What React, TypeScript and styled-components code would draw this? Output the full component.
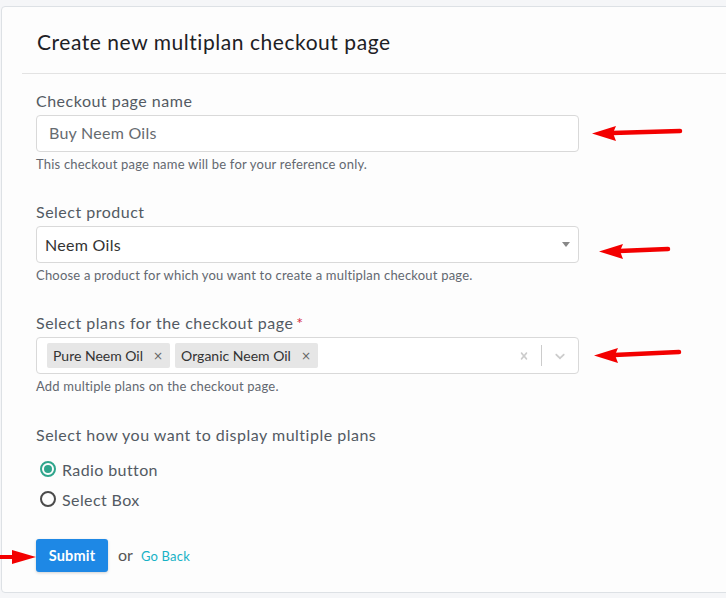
import React from "react";
import styled, { createGlobalStyle } from "styled-components";

const Global = createGlobalStyle`
  html, body { margin: 0; padding: 0; overflow: hidden; background: #f5f6f8; }
  body { font-family: Lato, "Open Sans", "Liberation Sans", sans-serif; }
  * { box-sizing: border-box; }
`;

const Page = styled.div`
  padding: 6px 0 0 1px;
  height: 598px;
`;

const Card = styled.div`
  position: relative;
  width: 760px;
  background: #fdfdfd;
  border: 1px solid #dde1e5;
  border-radius: 4px;
`;

const Header = styled.div`
  margin-left: 20px;
  padding: 22px 0 19px 15px;
  border-bottom: 1px solid #e3e3e3;
`;

const Title = styled.h1`
  margin: 0;
  font-size: 21px;
  line-height: 25px;
  font-weight: 400;
  letter-spacing: 0.55px;
  color: #1d2125;
`;

const Form = styled.div`
  padding: 17px 0 20px 34px;
`;

const Field = styled.div<{ $gap?: number }>`
  margin-bottom: ${(p) => p.$gap ?? 30}px;
`;

const Label = styled.div`
  font-size: 16px;
  line-height: 20px;
  letter-spacing: 0.5px;
  color: #535a63;
  margin-bottom: 4px;
`;

const Required = styled.span`
  color: #d62f45;
  margin-left: 3px;
`;

const Box = styled.div`
  width: 543px;
  height: 37px;
  border: 1px solid #d9d9d9;
  border-radius: 4px;
  background: #fff;
  display: flex;
  align-items: center;
`;

const InputText = styled.span`
  padding-left: 12px;
  padding-bottom: 2px;
  font-size: 16px;
  letter-spacing: 0.25px;
  color: #666b70;
`;

const SelectText = styled.span`
  flex: 1;
  padding-left: 8px;
  padding-bottom: 1px;
  font-size: 16px;
  letter-spacing: 0.3px;
  color: #333;
`;

const Caret = styled.span`
  width: 0;
  height: 0;
  border-left: 4.5px solid transparent;
  border-right: 4.5px solid transparent;
  border-top: 5px solid #888;
  margin-right: 8px;
`;

const Help = styled.div`
  margin-top: 4px;
  font-size: 13px;
  line-height: 16px;
  letter-spacing: 0.2px;
  color: #636870;
`;

const Tags = styled.div`
  flex: 1;
  display: flex;
  gap: 5px;
  padding-left: 10px;
`;

const Tag = styled.span`
  display: inline-flex;
  align-items: center;
  height: 25px;
  background: #e6e6e6;
  border-radius: 2px;
  padding: 0 7px 0 6px;
  font-size: 14px;
  color: #333;
`;

const TagX = styled.span`
  margin-left: 10px;
  font-size: 12px;
  color: #666;
  font-family: "DejaVu Sans", sans-serif;
`;

const Indicators = styled.div`
  display: flex;
  align-items: center;
  height: 100%;
  padding-right: 10px;
`;

const Sep = styled.span`
  width: 1px;
  height: 21px;
  background: #ccc;
  margin: 0 10px 0 10px;
`;

const RadioList = styled.div`
  display: flex;
  flex-direction: column;
  margin-top: 9px;
`;

const RadioRow = styled.label`
  display: flex;
  align-items: center;
  height: 30px;
  font-size: 16px;
  letter-spacing: 0.4px;
  color: #535a63;
  padding-left: 4px;
`;

const RadioDot = styled.span<{ $on?: boolean }>`
  width: 16px;
  height: 16px;
  border-radius: 50%;
  border: 2px solid ${(p) => (p.$on ? "#2fa58c" : "#4a4a4a")};
  margin-right: 6px;
  display: flex;
  align-items: center;
  justify-content: center;
  &::after {
    content: "";
    width: 8px;
    height: 8px;
    border-radius: 50%;
    background: ${(p) => (p.$on ? "#2fa58c" : "transparent")};
  }
`;

const Actions = styled.div`
  display: flex;
  align-items: center;
  margin-top: 25px;
  gap: 10px;
`;

const Submit = styled.button`
  width: 72px;
  height: 33px;
  border: none;
  border-radius: 3px;
  background: #1e88e5;
  color: #fff;
  font-family: inherit;
  font-size: 14.5px;
  font-weight: 700;
  letter-spacing: 0.2px;
  box-shadow: 0 1px 3px rgba(0, 0, 0, 0.18);
  padding: 0;
`;

const Or = styled.span`
  font-size: 16px;
  color: #555;
  margin-top: -3px;
`;

const Back = styled.a`
  font-size: 13px;
  letter-spacing: 0.2px;
  color: #17b2c6;
  text-decoration: none;
  margin-left: -2px;
`;

const ArrowSvg = styled.svg<{ $x: number; $y: number }>`
  position: absolute;
  left: ${(p) => p.$x}px;
  top: ${(p) => p.$y}px;
  overflow: visible;
`;

function Arrow({ x, y, len, tilt = 2, right = false }: { x: number; y: number; len: number; tilt?: number; right?: boolean }) {
  const head = 24;
  if (right) {
    return (
      <ArrowSvg $x={x} $y={y} width={len} height={16}>
        <line x1={0} y1={8} x2={len - head + 2} y2={8} stroke="#f30000" strokeWidth={4} strokeLinecap="round" />
        <polygon points={`${len - head},1 ${len},8 ${len - head},15`} fill="#f30000" />
      </ArrowSvg>
    );
  }
  return (
    <ArrowSvg $x={x} $y={y} width={len} height={16}>
      <line x1={head - 4} y1={8} x2={len - 2} y2={8 - tilt} stroke="#f30000" strokeWidth={4.5} strokeLinecap="round" />
      <polygon points={`0,8.5 ${head},1 ${head - 3},8 ${head},16`} fill="#f30000" />
    </ArrowSvg>
  );
}

export default function App() {
  return (
    <>
      <Global />
      <Page>
        <Card>
          <Header>
            <Title>Create new multiplan checkout page</Title>
          </Header>
          <Form>
            <Field>
              <Label>Checkout page name</Label>
              <Box>
                <InputText>Buy Neem Oils</InputText>
              </Box>
              <Help>This checkout page name will be for your reference only.</Help>
            </Field>
            <Field>
              <Label>Select product</Label>
              <Box>
                <SelectText>Neem Oils</SelectText>
                <Caret />
              </Box>
              <Help>Choose a product for which you want to create a multiplan checkout page.</Help>
            </Field>
            <Field $gap={31}>
              <Label>
                Select plans for the checkout page<Required>*</Required>
              </Label>
              <Box>
                <Tags>
                  <Tag>
                    Pure Neem Oil<TagX>×</TagX>
                  </Tag>
                  <Tag>
                    Organic Neem Oil<TagX>×</TagX>
                  </Tag>
                </Tags>
                <Indicators>
                  <svg width="14" height="14" viewBox="0 0 20 20">
                    <path d="M14.348 14.849c-.469.469-1.229.469-1.697 0L10 11.819l-2.651 3.029c-.469.469-1.229.469-1.697 0-.469-.469-.469-1.229 0-1.697l2.758-3.150-2.759-3.152c-.469-.469-.469-1.228 0-1.697.469-.469 1.228-.469 1.697 0L10 8.183l2.651-3.031c.469-.469 1.228-.469 1.697 0 .469.469.469 1.229 0 1.697l-2.758 3.152 2.758 3.150c.469.469.469 1.229 0 1.698z" fill="#cccccc" />
                  </svg>
                  <Sep />
                  <svg width="16" height="16" viewBox="0 0 20 20">
                    <path d="M4.516 7.548c.436-.446 1.043-.481 1.576 0L10 11.295l3.908-3.747c.533-.481 1.141-.446 1.574 0 .436.445.408 1.197 0 1.615-.406.418-4.695 4.502-4.695 4.502a1.095 1.095 0 0 1-1.576 0S4.924 9.581 4.516 9.163c-.409-.418-.436-1.170 0-1.615z" fill="#cccccc" />
                  </svg>
                </Indicators>
              </Box>
              <Help>Add multiple plans on the checkout page.</Help>
            </Field>
            <Field $gap={0}>
              <Label>Select how you want to display multiple plans</Label>
              <RadioList>
                <RadioRow>
                  <RadioDot $on />
                  Radio button
                </RadioRow>
                <RadioRow>
                  <RadioDot />
                  Select Box
                </RadioRow>
              </RadioList>
            </Field>
            <Actions>
              <Submit>Submit</Submit>
              <Or>or</Or>
              <Back href="#">Go Back</Back>
            </Actions>
          </Form>
          <Arrow x={590} y={118} len={90} tilt={2} />
          <Arrow x={597} y={236} len={71} tilt={2} />
          <Arrow x={592} y={340} len={87} tilt={3} />
          <Arrow x={-2} y={542} len={36} right />
        </Card>
      </Page>
    </>
  );
}
